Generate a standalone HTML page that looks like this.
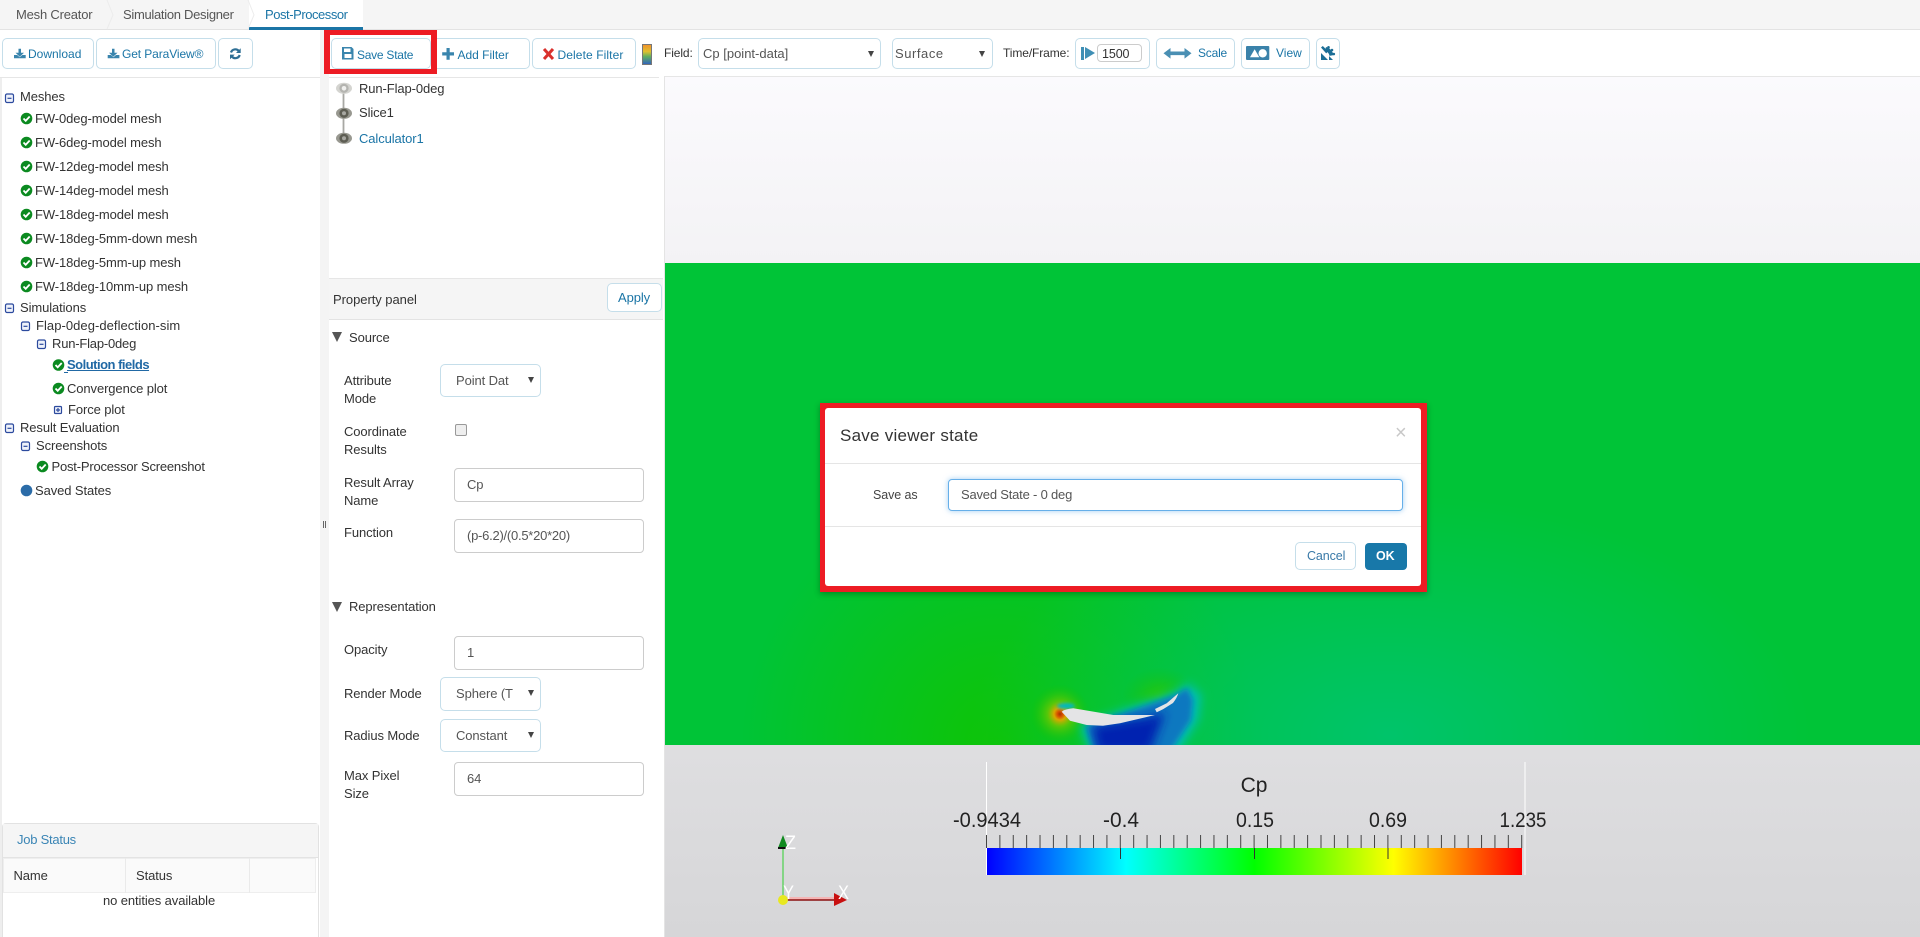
<!DOCTYPE html>
<html><head><meta charset="utf-8"><title>Post-Processor</title>
<style>
html,body{margin:0;padding:0;width:1920px;height:937px;overflow:hidden;background:#fff}
body{position:relative;font-family:"Liberation Sans",sans-serif;font-size:13px;color:#333}
.t{position:absolute;white-space:nowrap;line-height:16px;height:16px;margin-top:-8px;font-size:13px;letter-spacing:-.1px}
.a{position:absolute;box-sizing:border-box}
.b{position:absolute;box-sizing:border-box;background:#fff;border:1px solid #c5deea;border-radius:5px}
.i{position:absolute;box-sizing:border-box;background:#fff;border:1px solid #ccc;border-radius:4px}
.l{color:#1b75a6}
.g{color:#555}
svg{position:absolute;left:0;top:0;overflow:hidden}
</style></head><body>

<!-- viewer background -->
<div class="a" style="left:664px;top:76px;width:1256px;height:861px;background:linear-gradient(#fbfafd,#d6d6d8);border-left:1px solid #e4e4e4;border-top:1px solid #e6e6e6"></div>

<!-- gutter & panel lines -->
<div class="a" style="left:320px;top:30px;width:9px;height:907px;background:#f4f4f4"></div>
<div class="a" style="left:0;top:77px;width:320px;height:1px;background:#e6e6e6"></div>
<div class="a" style="left:329px;top:77px;width:330px;height:1px;background:#e6e6e6"></div>
<div class="a" style="left:0;top:78px;width:2px;height:859px;background:#eee"></div>

<!-- tabs -->
<div class="a" style="left:0;top:0;width:1920px;height:30px;background:#f5f5f5;border-bottom:1px solid #e3e3e3"></div>
<div class="a" style="left:249px;top:0;width:114px;height:30px;background:#fff;border-bottom:3px solid #1b75a6"></div>
<svg width="1920" height="30" viewBox="0 0 1920 30"><path d="M107 0l6 15-6 14M248 0l6 15-6 14" fill="none" stroke="#ececec"/></svg>
<span class="t" style="left:16px;top:14.500px;color:#555;letter-spacing:-.2px">Mesh Creator</span>
<span class="t" style="left:123px;top:14.500px;color:#555;letter-spacing:-.3px">Simulation Designer</span>
<span class="t l" style="left:265px;top:14.500px;letter-spacing:-.45px">Post-Processor</span>

<!-- CFD field & all icons -->
<svg width="1920" height="937" viewBox="0 0 1920 937">
<defs>
<clipPath id="cf"><rect x="665" y="263" width="1255" height="482"/></clipPath>
<filter id="f5" x="-50%" y="-50%" width="200%" height="200%"><feGaussianBlur stdDeviation="5"/></filter>
<filter id="f3" x="-50%" y="-50%" width="200%" height="200%"><feGaussianBlur stdDeviation="3"/></filter>
<filter id="f2" x="-50%" y="-50%" width="200%" height="200%"><feGaussianBlur stdDeviation="1.500"/></filter>
<radialGradient id="gL" gradientUnits="userSpaceOnUse" cx="0" cy="0" r="1" gradientTransform="translate(1000 745) scale(260 260)"><stop offset="0" stop-color="#10c400" stop-opacity=".9"/><stop offset="1" stop-color="#10c400" stop-opacity="0"/></radialGradient>
<radialGradient id="gW" gradientUnits="userSpaceOnUse" cx="0" cy="0" r="1" gradientTransform="translate(1390 735) scale(420 240)"><stop offset="0" stop-color="#00c470" stop-opacity=".9"/><stop offset="1" stop-color="#00c470" stop-opacity="0"/></radialGradient>
<radialGradient id="gF"><stop offset="0" stop-color="#30c800" stop-opacity=".9"/><stop offset="1" stop-color="#10c410" stop-opacity="0"/></radialGradient>
<radialGradient id="gE"><stop offset="0" stop-color="#a83000"/><stop offset=".09" stop-color="#d85000"/><stop offset=".2" stop-color="#d8a800"/><stop offset=".42" stop-color="#70c800" stop-opacity=".75"/><stop offset="1" stop-color="#10c400" stop-opacity="0"/></radialGradient>
<linearGradient id="sw" x1="0" y1="0" x2="0" y2="1"><stop offset="0" stop-color="#f0902a"/><stop offset=".35" stop-color="#e0c030"/><stop offset=".6" stop-color="#60b060"/><stop offset="1" stop-color="#3060c0"/></linearGradient>
<linearGradient id="cb" x1="0" y1="0" x2="1" y2="0"><stop offset="0" stop-color="#0000ff"/><stop offset=".26" stop-color="#00ffff"/><stop offset=".5" stop-color="#00ff00"/><stop offset=".76" stop-color="#ffff00"/><stop offset="1" stop-color="#ff0000"/></linearGradient>
</defs>
<g clip-path="url(#cf)">
<rect x="665" y="263" width="1255" height="482" fill="#00c437"/>
<rect x="665" y="263" width="1255" height="482" fill="url(#gL)"/>
<rect x="665" y="263" width="1255" height="482" fill="url(#gW)"/>
<ellipse cx="1160" cy="697" rx="38" ry="30" fill="url(#gF)"/>
<ellipse cx="1060" cy="714" rx="30" ry="30" fill="url(#gE)"/>
<path d="M1176 692L1188 683L1201 695L1198 720L1178 752L1090 752L1080 725Z" fill="#00c0b8" filter="url(#f5)"/>
<path d="M1176 695L1187 688L1193 700L1191 720L1170 752L1095 752L1086 726Z" fill="#0a78c0" filter="url(#f3)"/>
<path d="M1092 726L1150 717L1165 712L1150 752L1098 752Z" fill="#0020b0" filter="url(#f5)"/>
<ellipse cx="1066" cy="706" rx="9" ry="3" fill="#00b8c0" filter="url(#f2)"/>
<path d="M1061.700 711.700Q1065 709 1073.300 708.300L1113.300 715L1155 715L1157 714.500L1120 723.300L1103 725.700L1086.700 725L1070 720.700Z" fill="#e4e4e6"/>
<path d="M1155 709L1166.700 703.300L1178.300 693.300Q1177 698 1173 703L1163 709.300L1156.700 712.300Z" fill="#e4e4e6"/>
</g>

<!-- scalar bar -->
<line x1="986.500" y1="762" x2="986.500" y2="875" stroke="#fff"/>
<line x1="1525" y1="762" x2="1525" y2="875" stroke="#fff"/>
<line x1="986" y1="841.500" x2="1523" y2="841.500" stroke="#444" stroke-width="13" stroke-dasharray="1 12.380"/>
<rect x="987" y="848" width="535" height="27" fill="url(#cb)"/>
<path d="M1120.500 848v11M1254.500 848v11M1388 848v11" stroke="#333"/>
<text x="1254" y="792" font-size="21" text-anchor="middle" fill="#222" font-family="Liberation Sans">Cp</text>
<g font-size="21" text-anchor="middle" fill="#222" font-family="Liberation Sans">
<text x="987" y="827" textLength="68" lengthAdjust="spacingAndGlyphs">-0.9434</text>
<text x="1121" y="827" textLength="36" lengthAdjust="spacingAndGlyphs">-0.4</text>
<text x="1255" y="827" textLength="38" lengthAdjust="spacingAndGlyphs">0.15</text>
<text x="1388" y="827" textLength="38" lengthAdjust="spacingAndGlyphs">0.69</text>
<text x="1523" y="827" textLength="47" lengthAdjust="spacingAndGlyphs">1.235</text>
</g>
<!-- axes -->
<line x1="783" y1="898.500" x2="838" y2="898.500" stroke="#f5b5b5" stroke-width="3"/>
<line x1="783" y1="900" x2="838" y2="900" stroke="#8a1010" stroke-width="1.500"/>
<line x1="783" y1="846" x2="783" y2="900" stroke="#30d030" stroke-width="1"/>
<path d="M778 848L783 835L788 848Z" fill="#108a20"/><rect x="778" y="847" width="10" height="2" fill="#111"/>
<path d="M834 893L847 900L834 906Z" fill="#c81010"/>
<circle cx="783" cy="900" r="5" fill="#e8e820"/>
<g fill="#fff" font-family="Liberation Sans" font-size="19">
<text x="785" y="849" textLength="11" lengthAdjust="spacingAndGlyphs">Z</text><text x="783" y="899" textLength="11" lengthAdjust="spacingAndGlyphs">Y</text><text x="838" y="899" textLength="11" lengthAdjust="spacingAndGlyphs">X</text></g>

<!-- left toolbar icons -->
<g fill="#3a85ad">
<path d="M18.500 48.700h2.500v4h3l-4.250 4-4.250-4h3zM14 55h3.200l2.550 2.200 2.550-2.200h3.400v3.300H14z"/>
<path d="M112 48.700h2.500v4h3l-4.250 4-4.250-4h3zM107.700 55h3.200l2.550 2.200 2.550-2.200h3.400v3.300H107.700z"/>
<path d="M342 47h9.500l2 2v10.500h-11.500zM344 48.500v3.500h6.500v-3.500zM344.500 54v4h7v-4z" fill-rule="evenodd"/>
<path d="M446.500 48h3.200v4.300h4.300v3.200h-4.300v4.300h-3.200v-4.300h-4.300v-3.200h4.300z"/>
</g>
<path d="M231 52.500a4.500 4.500 0 0 1 7.800-1.500M239.700 55a4.500 4.500 0 0 1-7.800 1.500" fill="none" stroke="#2f6f95" stroke-width="2.200"/>
<path d="M240.700 48.300v4.700h-4.700zM230 59.300v-4.700h4.700z" fill="#2f6f95"/>
<path d="M544 49l9 10M553 49l-9 10" stroke="#d9302c" stroke-width="3"/>
<rect x="642.500" y="44.500" width="9" height="20" fill="url(#sw)" stroke="#777"/>

<!-- eye icons -->
<line x1="343.500" y1="88" x2="343.500" y2="138" stroke="#a8a8a4" stroke-width="1.800"/>
<ellipse cx="344" cy="88.300" rx="8" ry="5.500" fill="#d4d4d0"/><circle cx="344" cy="88.300" r="4.600" fill="#b4b4b0"/><circle cx="344" cy="88.300" r="2.300" fill="#f0f0ee"/>
<ellipse cx="344" cy="113.300" rx="8" ry="5.500" fill="#989890"/><circle cx="344" cy="113.300" r="4.600" fill="#5e5e54"/><circle cx="344" cy="113.300" r="2" fill="#a8a8a2"/>
<ellipse cx="344" cy="138.300" rx="8" ry="5.500" fill="#989890"/><circle cx="344" cy="138.300" r="4.600" fill="#5e5e54"/><circle cx="344" cy="138.300" r="2" fill="#a8a8a2"/>

<!-- tree toggles -->
<g fill="#eef2fa" stroke="#2c4a9e" stroke-width="1.200">
<rect x="5.500" y="94" width="8" height="8.500" rx="1.500"/><path d="M7.500 98.300h4"/>
<rect x="5.500" y="304" width="8" height="8.500" rx="1.500"/><path d="M7.500 308.300h4"/>
<rect x="21.500" y="322" width="8" height="8.500" rx="1.500"/><path d="M23.500 326.300h4"/>
<rect x="37.500" y="340" width="8" height="8.500" rx="1.500"/><path d="M39.500 344.300h4"/>
<rect x="54.500" y="406.500" width="7" height="7" rx="1"/><path d="M56 410h4M58 408v4"/>
<rect x="5.500" y="424" width="8" height="8.500" rx="1.500"/><path d="M7.500 428.300h4"/>
<rect x="21.500" y="442" width="8" height="8.500" rx="1.500"/><path d="M23.500 446.300h4"/>
</g>

<!-- check icons -->
<g fill="#0b8a20">
<circle cx="26.500" cy="118.500" r="5.800"/><circle cx="26.500" cy="142.500" r="5.800"/><circle cx="26.500" cy="166.500" r="5.800"/><circle cx="26.500" cy="190.500" r="5.800"/><circle cx="26.500" cy="214.500" r="5.800"/><circle cx="26.500" cy="238.500" r="5.800"/><circle cx="26.500" cy="262.500" r="5.800"/><circle cx="26.500" cy="286.500" r="5.800"/>
<circle cx="58.500" cy="365" r="5.800"/><circle cx="58.500" cy="388.500" r="5.800"/><circle cx="42.500" cy="466.500" r="5.800"/>
</g>
<path d="M23.500 118.500l2.200 2.300 4-4.300M23.500 142.500l2.200 2.300 4-4.300M23.500 166.500l2.200 2.300 4-4.300M23.500 190.500l2.200 2.300 4-4.300M23.500 214.500l2.200 2.300 4-4.300M23.500 238.500l2.200 2.300 4-4.300M23.500 262.500l2.200 2.300 4-4.300M23.500 286.500l2.200 2.300 4-4.300M55.500 365l2.200 2.300 4-4.300M55.500 388.500l2.200 2.300 4-4.300M39.500 466.500l2.200 2.300 4-4.300" fill="none" stroke="#fff" stroke-width="1.800"/>
<circle cx="26.500" cy="490.500" r="5.800" fill="#2b6ca8"/>
</svg>

<!-- left toolbar -->
<div class="b" style="left:2px;top:38px;width:92px;height:31px;background:none"></div>
<div class="b" style="left:95.500px;top:38px;width:120px;height:31px;background:none"></div>
<div class="b" style="left:217.500px;top:38px;width:35px;height:31px;background:none"></div>
<span class="t l" style="left:28px;top:54px;font-size:12px;letter-spacing:0">Download</span>
<span class="t l" style="left:122px;top:54px;font-size:12px">Get ParaView®</span>

<!-- filter toolbar -->
<div class="a" style="left:324px;top:30px;width:113px;height:44px;border:solid #ed1c24;border-width:5px 6px"></div>
<div class="b" style="left:331px;top:38px;width:100px;height:31px;background:none"></div>
<div class="b" style="left:437px;top:38px;width:93px;height:31px;border-left:0;border-radius:0 5px 5px 0;background:none"></div>
<div class="b" style="left:531.500px;top:38px;width:104px;height:31px;background:none"></div>
<span class="t l" style="left:357px;top:55px;font-size:12px;letter-spacing:-.25px">Save State</span>
<span class="t l" style="left:457.500px;top:55px;font-size:12px;letter-spacing:0">Add Filter</span>
<span class="t l" style="left:557.500px;top:55px;font-size:12px;letter-spacing:.1px">Delete Filter</span>

<!-- field controls -->
<span class="t" style="left:664px;top:53px;font-size:12px">Field:</span>
<div class="b" style="left:698px;top:38px;width:183px;height:31px"></div>
<span class="t g" style="left:703px;top:54px;letter-spacing:0">Cp [point-data]</span>
<div class="a" style="left:868px;top:50.500px;border:solid transparent;border-width:6px 3.500px 0;border-top-color:#444"></div>
<div class="b" style="left:891.500px;top:38px;width:101px;height:31px"></div>
<span class="t g" style="left:895px;top:54px;letter-spacing:.55px">Surface</span>
<div class="a" style="left:979px;top:50.500px;border:solid transparent;border-width:6px 3.500px 0;border-top-color:#444"></div>
<span class="t" style="left:1003px;top:53px;font-size:12px">Time/Frame:</span>
<div class="b" style="left:1075px;top:38px;width:75px;height:31px"></div>
<div class="a" style="left:1081px;top:47px;width:3px;height:12.500px;background:#3f8fb5"></div>
<div class="a" style="left:1085px;top:47px;border:solid transparent;border-width:6.250px 0 6.250px 10px;border-left-color:#3f8fb5"></div>
<div class="i" style="left:1097px;top:44px;width:45px;height:18px"></div>
<span class="t" style="left:1102px;top:53.500px;font-size:12.500px">1500</span>
<div class="b" style="left:1155.500px;top:38px;width:79px;height:31px"></div>
<span class="t l" style="left:1198px;top:53px;font-size:12px;letter-spacing:-.2px">Scale</span>
<div class="b" style="left:1240.500px;top:38px;width:69px;height:31px"></div>
<span class="t l" style="left:1276px;top:53px;font-size:12px;letter-spacing:0">View</span>
<div class="b" style="left:1315.500px;top:38px;width:24px;height:31px"></div>
<svg width="1920" height="937" viewBox="0 0 1920 937">
<path d="M1163.500 53.300l7-5.300v3.500h14v-3.500l7 5.300-7 5.300v-3.500h-14v3.500z" fill="#4a8fb3"/>
<rect x="1246" y="46" width="23.300" height="14" rx="1" fill="#3a82aa"/>
<path d="M1250 57.300l4.650-8 4.650 8z" fill="#fff"/><circle cx="1262.700" cy="53.300" r="4.200" fill="#fff"/>
<path d="M1325.500 49A8 8 0 0 1 1331.500 55.500" fill="none" stroke="#1c6e96" stroke-width="4"/>
<g fill="#1c6e96">
<circle cx="1328.500" cy="47.300" r="1.300"/><circle cx="1332" cy="50" r="1.300"/><circle cx="1333.800" cy="54" r="1.300"/>
<path d="M1321 47.500l1.800-1.500 5.400 5.400-2 2z"/>
<path d="M1321 53l7 7h-7z"/>
<path d="M1329 56l4 4h-4z"/>
</g>
</svg>

<!-- tree text -->
<span class="t" style="left:20px;top:97px">Meshes</span>
<span class="t" style="left:35px;top:118.500px">FW-0deg-model mesh</span>
<span class="t" style="left:35px;top:142.500px">FW-6deg-model mesh</span>
<span class="t" style="left:35px;top:166.500px">FW-12deg-model mesh</span>
<span class="t" style="left:35px;top:190.500px">FW-14deg-model mesh</span>
<span class="t" style="left:35px;top:214.500px">FW-18deg-model mesh</span>
<span class="t" style="left:35px;top:238.500px">FW-18deg-5mm-down mesh</span>
<span class="t" style="left:35px;top:262.500px">FW-18deg-5mm-up mesh</span>
<span class="t" style="left:35px;top:286.500px">FW-18deg-10mm-up mesh</span>
<span class="t" style="left:20px;top:307.500px">Simulations</span>
<span class="t" style="left:36px;top:325.500px;letter-spacing:.05px">Flap-0deg-deflection-sim</span>
<span class="t" style="left:52px;top:343.500px;letter-spacing:-.2px">Run-Flap-0deg</span>
<span class="t" style="left:67px;top:364.500px;color:#2169a5;font-weight:bold;letter-spacing:-.5px;text-decoration:underline">Solution fields</span>
<div class="a" style="left:64px;top:372px;width:4px;height:1px;background:#2169a5"></div>
<span class="t" style="left:67px;top:388.500px">Convergence plot</span>
<span class="t" style="left:68px;top:409.500px">Force plot</span>
<span class="t" style="left:20px;top:427.500px">Result Evaluation</span>
<span class="t" style="left:36px;top:445.500px">Screenshots</span>
<span class="t" style="left:51.500px;top:466.500px;letter-spacing:-.2px">Post-Processor Screenshot</span>
<span class="t" style="left:35px;top:490.500px">Saved States</span>

<!-- gutter handle -->
<div class="a" style="left:323px;top:521px;width:1px;height:7px;background:#666"></div>
<div class="a" style="left:325px;top:521px;width:1px;height:7px;background:#666"></div>

<!-- pipeline -->
<span class="t" style="left:359px;top:88.500px">Run-Flap-0deg</span>
<span class="t" style="left:359px;top:113px">Slice1</span>
<span class="t l" style="left:359px;top:138.500px">Calculator1</span>

<!-- property panel -->
<div class="a" style="left:329px;top:278px;width:334px;height:42px;background:#f5f5f5;border-top:1px solid #e6e6e6;border-bottom:1px solid #e3e3e3"></div>
<span class="t" style="left:333px;top:299.500px;letter-spacing:-.05px">Property panel</span>
<div class="b" style="left:607px;top:283px;width:55px;height:29px"></div>
<span class="t l" style="left:618px;top:297.500px">Apply</span>

<div class="a" style="left:332px;top:332px;border:solid transparent;border-width:10px 5.500px 0;border-top-color:#555"></div>
<span class="t" style="left:349px;top:337.500px">Source</span>
<span class="t" style="left:344px;top:380.500px">Attribute</span>
<span class="t" style="left:344px;top:398.500px">Mode</span>
<div class="b" style="left:439.500px;top:363.500px;width:101px;height:33.500px"></div>
<span class="t g" style="left:456px;top:380.500px">Point Dat</span>
<div class="a" style="left:528px;top:377px;border:solid transparent;border-width:6px 3.500px 0;border-top-color:#444"></div>
<span class="t" style="left:344px;top:431.500px">Coordinate</span>
<span class="t" style="left:344px;top:449.500px">Results</span>
<div class="a" style="left:454.500px;top:424px;width:12px;height:12px;border:1px solid #999;border-radius:2px;background:#eee"></div>
<span class="t" style="left:344px;top:482.500px">Result Array</span>
<span class="t" style="left:344px;top:500.500px">Name</span>
<div class="i" style="left:454px;top:468px;width:190px;height:33.500px"></div>
<span class="t g" style="left:467px;top:485px">Cp</span>
<span class="t" style="left:344px;top:533px">Function</span>
<div class="i" style="left:454px;top:519px;width:190px;height:33.500px"></div>
<span class="t g" style="left:467px;top:536px;letter-spacing:-.25px">(p-6.2)/(0.5*20*20)</span>

<div class="a" style="left:332px;top:602px;border:solid transparent;border-width:10px 5.500px 0;border-top-color:#555"></div>
<span class="t" style="left:349px;top:607px">Representation</span>
<span class="t" style="left:344px;top:650px">Opacity</span>
<div class="i" style="left:454px;top:636px;width:190px;height:33.500px"></div>
<span class="t g" style="left:467px;top:653px">1</span>
<span class="t" style="left:344px;top:694px">Render Mode</span>
<div class="b" style="left:439.500px;top:677px;width:101px;height:33.500px"></div>
<span class="t g" style="left:456px;top:694px">Sphere (T</span>
<div class="a" style="left:528px;top:690px;border:solid transparent;border-width:6px 3.500px 0;border-top-color:#444"></div>
<span class="t" style="left:344px;top:735.500px">Radius Mode</span>
<div class="b" style="left:439.500px;top:718.500px;width:101px;height:33.500px"></div>
<span class="t g" style="left:456px;top:735.500px">Constant</span>
<div class="a" style="left:528px;top:731.500px;border:solid transparent;border-width:6px 3.500px 0;border-top-color:#444"></div>
<span class="t" style="left:344px;top:776px">Max Pixel</span>
<span class="t" style="left:344px;top:794px">Size</span>
<div class="i" style="left:454px;top:762px;width:190px;height:33.500px"></div>
<span class="t g" style="left:467px;top:779px">64</span>

<!-- job status -->
<div class="a" style="left:2px;top:822.500px;width:317px;height:114.500px;background:#fff;border:1px solid #e2e2e2;border-bottom:0;border-radius:4px 4px 0 0"></div>
<div class="a" style="left:3px;top:823.500px;width:315px;height:34px;background:#f5f5f5;border-bottom:1px solid #e3e3e3"></div>
<span class="t" style="left:17px;top:840px;color:#3a85b5;letter-spacing:-.25px">Job Status</span>
<div class="a" style="left:3px;top:858px;width:313px;height:35px;background:#fafafa;border:1px solid #eee"></div>
<div class="a" style="left:125px;top:858px;width:1px;height:35px;background:#eaeaea"></div>
<div class="a" style="left:249px;top:858px;width:1px;height:35px;background:#eaeaea"></div>
<span class="t" style="left:13.500px;top:876px">Name</span>
<span class="t" style="left:136px;top:876px">Status</span>
<span class="t" style="left:103px;top:901px">no entities available</span>

<!-- dialog -->
<div class="a" style="left:820px;top:403px;width:607px;height:189px;background:#ed1c24;box-shadow:0 2px 6px rgba(0,0,0,.3)"></div>
<div class="a" style="left:825px;top:408px;width:596px;height:178px;background:#fff;border-radius:3px"></div>
<span class="t" style="left:840px;top:435.500px;font-size:17px;height:22px;line-height:22px;margin-top:-11px;letter-spacing:.25px">Save viewer state</span>
<span class="t" style="left:1395px;top:433px;font-size:20px;color:#c8c8c8;height:20px;line-height:20px;margin-top:-10px">×</span>
<div class="a" style="left:825px;top:463px;width:596px;height:1px;background:#e5e5e5"></div>
<span class="t" style="left:873px;top:495px;color:#444;font-size:12.500px">Save as</span>
<div class="a" style="left:948px;top:479px;width:455px;height:32px;background:#fff;border:1px solid #66afe9;border-radius:4px;box-shadow:0 0 6px rgba(102,175,233,.6)"></div>
<span class="t g" style="left:961px;top:495px;letter-spacing:-.2px">Saved State - 0 deg</span>
<div class="a" style="left:825px;top:526px;width:596px;height:1px;background:#e5e5e5"></div>
<div class="b" style="left:1295px;top:542px;width:61px;height:28px"></div>
<span class="t" style="left:1307px;top:556px;color:#3a7aa8;font-size:12.500px">Cancel</span>
<div class="a" style="left:1365px;top:543px;width:42px;height:27px;background:#1878a9;border-radius:4px"></div>
<span class="t" style="left:1376px;top:556px;color:#fff;font-size:12.500px;font-weight:bold">OK</span>

</body></html>
